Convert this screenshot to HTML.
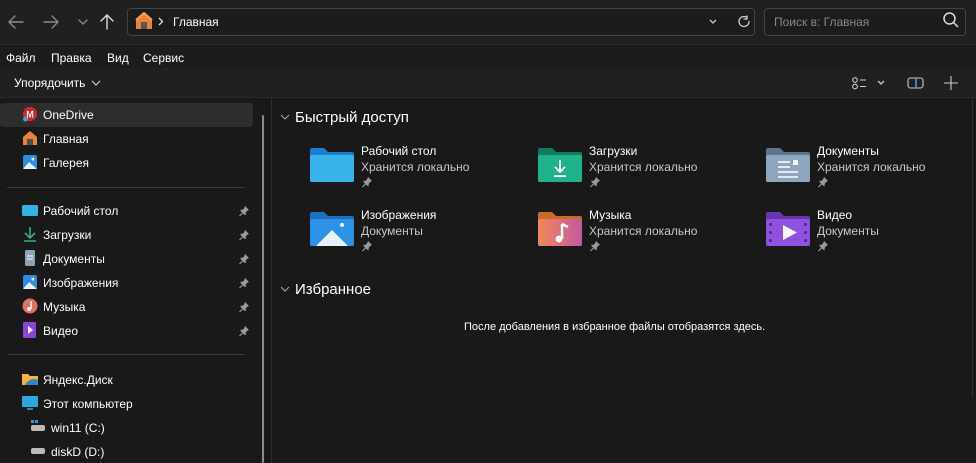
<!DOCTYPE html>
<html><head><meta charset="utf-8"><style>
*{margin:0;padding:0;box-sizing:border-box}
body{width:976px;height:463px;overflow:hidden;background:#191919;font-family:"Liberation Sans","Noto Sans CJK SC",sans-serif;color:#fff;position:relative;font-size:12px}
.a{position:absolute}
.top{left:0;top:0;width:976px;height:44px;background:#202020}
.menu{left:0;top:44px;width:976px;height:24px;background:#1c1c1c;border-top:1px solid #2c2c2c}
.tb{left:0;top:68px;width:976px;height:30px;background:#202020;border-bottom:1px solid #2a2a2a}
.addr{left:127px;top:8px;width:628px;height:28px;border:1px solid #444;border-radius:4px;background:#1c1c1c}
.srch{left:764px;top:8px;width:202px;height:28px;border:1px solid #444;border-radius:4px;background:#1c1c1c}
.t{white-space:nowrap;font-size:12px;color:#fff}
.g{color:#c8c8c8}
.sel{left:0;top:103px;width:253px;height:24px;background:#2d2d2d;border-radius:3px}
.hr{height:1px;background:#3a3a3a;left:7px;width:238px}
</style></head><body>
<svg width="0" height="0" style="position:absolute"><defs><g id="pin"><path d="M6 1L10 5L8 6L6.5 8.5L7 10L5.5 10L1.5 6L1.5 4.5L3 5L5 3.5Z" fill="#9a9a9a"/><path d="M3.5 8L0.5 11" stroke="#9a9a9a" stroke-width="1.2"/></g></defs></svg>
<div class="a top"></div>
<div class="a menu"></div>
<div class="a tb"></div>
<svg class="a" style="left:6px;top:12px" width="120" height="20" viewBox="0 0 120 20" fill="none" stroke-linecap="round" stroke-linejoin="round">
<path d="M3 10H17M3 10L9 4M3 10L9 16" stroke="#8a8a8a" stroke-width="1.4"/>
<path d="M38 10H52M52 10L46 4M52 10L46 16" stroke="#8a8a8a" stroke-width="1.4"/>
<path d="M73 8L77 12L81 8" stroke="#8a8a8a" stroke-width="1.3"/>
<path d="M101 17V3M101 3L95 9M101 3L107 9" stroke="#ddd" stroke-width="1.4"/>
</svg>
<div class="a addr"></div>
<svg class="a" style="left:135px;top:12px" width="18" height="18" viewBox="0 0 18 18"><path d="M9 1L1 8V17H17V8Z" fill="#e8843a"/><path d="M1 8L9 1L17 8" stroke="#f4a261" stroke-width="2" fill="none"/><rect x="6" y="10" width="6" height="7" fill="#555"/></svg>
<svg class="a" style="left:158px;top:17px" width="6" height="9"><path d="M1 1L4.5 4.5L1 8" stroke="#ddd" stroke-width="1.3" fill="none"/></svg>
<div class="a t" style="left:173px;top:15px;font-size:12px">Главная</div>
<svg class="a" style="left:706px;top:14px" width="50" height="16" viewBox="0 0 50 16" fill="none" stroke="#ccc" stroke-width="1.3"><path d="M4 6L7 9L10 6"/><path d="M41 3.5A5 5 0 1 0 43 7.5M41 2V5H38" stroke-linecap="round"/></svg>
<div class="a srch"></div>
<div class="a t" style="left:774px;top:15px;color:#888;font-size:12px">Поиск в: Главная</div>
<svg class="a" style="left:942px;top:11px" width="18" height="18" viewBox="0 0 18 18" fill="none" stroke="#ddd" stroke-width="1.5"><circle cx="7.5" cy="7.5" r="5.5"/><path d="M11.5 11.5L16 16"/></svg>
<div class="a t" style="left:6px;top:51px">Файл</div>
<div class="a t" style="left:51px;top:51px">Правка</div>
<div class="a t" style="left:107px;top:51px">Вид</div>
<div class="a t" style="left:143px;top:51px">Сервис</div>
<div class="a t" style="left:14px;top:76px">Упорядочить</div>
<svg class="a" style="left:91px;top:79px" width="10" height="8"><path d="M1 2L5 6L9 2" stroke="#ccc" stroke-width="1.2" fill="none"/></svg>
<svg class="a" style="left:850px;top:75px" width="115" height="16" viewBox="0 0 115 16" fill="none" stroke="#ccc" stroke-width="1.1"><circle cx="5" cy="5" r="2.3"/><circle cx="5" cy="11.5" r="2.3"/><path d="M10 5H16M10 11.5H16"/><path d="M28 6L31 9L34 6" stroke-width="1.3"/><rect x="58" y="3" width="15" height="10" rx="2.5"/><path d="M66 3V13" stroke="#4aa3e8" stroke-width="1.5"/><path d="M101 1V15M94 8H108"/></svg>
<div class="a sel"></div>
<div class="a" style="left:262px;top:115px;width:2px;height:348px;background:#8a8a8a;border-radius:1px"></div>
<div class="a" style="left:271px;top:98px;width:1px;height:365px;background:#2e2e2e"></div>
<div class="a" style="left:972px;top:98px;width:1px;height:300px;background:#2e2e2e"></div>
<svg class="a" style="left:22px;top:106px" width="16" height="16"><circle cx="8" cy="8" r="7" fill="#d8262c"/><text x="8" y="11.5" font-size="9" font-weight="bold" fill="#fff" text-anchor="middle" font-family="Liberation Sans">M</text><circle cx="3.5" cy="13" r="2.5" fill="#4a9ad4"/></svg>
<div class="a t" style="left:43px;top:108px">OneDrive</div>
<svg class="a" style="left:22px;top:130px" width="16" height="16"><path d="M8 1L1 7V15H15V7Z" fill="#e8843a"/><rect x="5" y="9" width="6" height="6" fill="#4d4d4d"/></svg>
<div class="a t" style="left:43px;top:132px">Главная</div>
<svg class="a" style="left:22px;top:154px" width="16" height="16"><rect x="1" y="1" width="14" height="14" rx="2" fill="#2a8ee0"/><path d="M1 15L7 8L15 15Z" fill="#e8f2fb"/><circle cx="11" cy="5" r="1.5" fill="#fff"/></svg>
<div class="a t" style="left:43px;top:156px">Галерея</div>
<div class="a hr" style="top:187px"></div>
<svg class="a" style="left:22px;top:202px" width="16" height="16"><rect x="0" y="3" width="16" height="11" rx="1.5" fill="#34b3e4"/></svg>
<div class="a t" style="left:43px;top:204px">Рабочий стол</div>
<svg class="a" style="left:22px;top:226px" width="16" height="16" fill="none" stroke="#2fb38a" stroke-width="1.6"><path d="M8 1V11M3 7L8 12L13 7M2 15H14"/></svg>
<div class="a t" style="left:43px;top:228px">Загрузки</div>
<svg class="a" style="left:22px;top:250px" width="16" height="16"><rect x="3" y="0" width="10" height="16" rx="1.5" fill="#8fa3b8"/><path d="M5 6H11M5 9H11" stroke="#fff" stroke-width="1"/></svg>
<div class="a t" style="left:43px;top:252px">Документы</div>
<svg class="a" style="left:22px;top:274px" width="16" height="16"><rect x="1" y="1" width="14" height="14" rx="2" fill="#2a8ee0"/><path d="M1 15L7 8L15 15Z" fill="#e8f2fb"/><circle cx="11" cy="5" r="1.5" fill="#fff"/></svg>
<div class="a t" style="left:43px;top:276px">Изображения</div>
<svg class="a" style="left:22px;top:298px" width="16" height="16"><circle cx="8" cy="8" r="7.5" fill="#e27063"/><path d="M9 3V11" stroke="#fff" stroke-width="1.5"/><circle cx="7" cy="11" r="2" fill="#fff"/></svg>
<div class="a t" style="left:43px;top:300px">Музыка</div>
<svg class="a" style="left:22px;top:322px" width="16" height="16"><rect x="1" y="0" width="13" height="16" rx="1.5" fill="#8b46d6"/><path d="M6 4L11 8L6 12Z" fill="#fff"/></svg>
<div class="a t" style="left:43px;top:324px">Видео</div>
<svg class="a" style="left:239px;top:205px" width="12" height="132"><use href="#pin" y="0"/><use href="#pin" y="24"/><use href="#pin" y="48"/><use href="#pin" y="72"/><use href="#pin" y="96"/><use href="#pin" y="120"/></svg>
<div class="a hr" style="top:354px"></div>
<svg class="a" style="left:22px;top:371px" width="16" height="16"><path d="M0 3H6L8 5H16V14H0Z" fill="#f0b73a"/><path d="M4 12Q10 6 16 9V14H3Z" fill="#3d82c6"/></svg>
<div class="a t" style="left:43px;top:373px">Яндекс.Диск</div>
<svg class="a" style="left:22px;top:395px" width="16" height="16"><rect x="0" y="1" width="16" height="11" rx="1" fill="#2fa8dc"/><rect x="5" y="13" width="6" height="2" fill="#3a7eb0"/></svg>
<div class="a t" style="left:43px;top:397px">Этот компьютер</div>
<svg class="a" style="left:30px;top:418px" width="16" height="16"><rect x="1" y="7" width="14" height="6" rx="2" fill="#bbb"/><rect x="1" y="2" width="3" height="3" fill="#3a9ad9"/><rect x="5" y="2" width="3" height="3" fill="#3a9ad9"/></svg>
<div class="a t" style="left:51px;top:421px">win11 (C:)</div>
<svg class="a" style="left:30px;top:442px" width="16" height="16"><rect x="1" y="6" width="14" height="6" rx="2" fill="#bbb"/></svg>
<div class="a t" style="left:51px;top:445px">diskD (D:)</div>
<svg class="a" style="left:280px;top:113px" width="10" height="8"><path d="M1 2L5 6L9 2" stroke="#aaa" stroke-width="1" fill="none"/></svg>
<div class="a t" style="left:295px;top:109px;font-size:15px">Быстрый доступ</div>
<svg class="a" style="left:280px;top:285px" width="10" height="8"><path d="M1 2L5 6L9 2" stroke="#aaa" stroke-width="1" fill="none"/></svg>
<div class="a t" style="left:295px;top:281px;font-size:15px">Избранное</div>
<div class="a t" style="left:464px;top:321px;font-size:11px">После добавления в избранное файлы отобразятся здесь.</div>
<svg class="a" style="left:310px;top:147px" width="44" height="36"><path d="M0 3Q0 1 2 1H14L18 5H42Q44 5 44 7V33Q44 35 42 35H2Q0 35 0 33Z" fill="#1a7fd0"/><rect x="0" y="8" width="44" height="27" rx="2" fill="#39b4ea"/></svg>
<svg class="a" style="left:538px;top:147px" width="44" height="36"><path d="M0 3Q0 1 2 1H14L18 5H42Q44 5 44 7V33Q44 35 42 35H2Q0 35 0 33Z" fill="#0f7d62"/><rect x="0" y="8" width="44" height="27" rx="2" fill="#20b38b"/><path d="M22 13V25M17 20L22 25L27 20M16 29H28" stroke="#fff" stroke-width="1.8" fill="none"/></svg>
<svg class="a" style="left:766px;top:147px" width="44" height="36"><path d="M0 3Q0 1 2 1H14L18 5H42Q44 5 44 7V33Q44 35 42 35H2Q0 35 0 33Z" fill="#5d7489"/><rect x="0" y="8" width="44" height="27" rx="2" fill="#8ea6bd"/><path d="M12 15H24M12 20H24M12 25H32M12 30H32" stroke="#fff" stroke-width="1.6"/><rect x="27" y="13" width="5" height="5" fill="#fff"/></svg>
<svg class="a" style="left:310px;top:211px" width="44" height="36"><path d="M0 3Q0 1 2 1H14L18 5H42Q44 5 44 7V33Q44 35 42 35H2Q0 35 0 33Z" fill="#1a6fc0"/><rect x="0" y="8" width="44" height="27" rx="2" fill="#2d92e6"/><path d="M6 35L22 19L38 35Z" fill="#e4f1fc"/><circle cx="32" cy="14" r="2" fill="#fff"/></svg>
<svg class="a" style="left:538px;top:211px" width="44" height="36"><defs><linearGradient id="m" x1="0" x2="1"><stop offset="0" stop-color="#f2885a"/><stop offset="1" stop-color="#c15a9e"/></linearGradient></defs><path d="M0 3Q0 1 2 1H14L18 5H42Q44 5 44 7V33Q44 35 42 35H2Q0 35 0 33Z" fill="#c86a2c"/><rect x="0" y="8" width="44" height="27" rx="2" fill="url(#m)"/><path d="M24 13V28" stroke="#fff" stroke-width="2.5"/><path d="M24 13L30 16" stroke="#fff" stroke-width="2.5"/><circle cx="21" cy="28" r="3.5" fill="#fff"/></svg>
<svg class="a" style="left:766px;top:211px" width="44" height="36"><path d="M0 3Q0 1 2 1H14L18 5H42Q44 5 44 7V33Q44 35 42 35H2Q0 35 0 33Z" fill="#6a36b0"/><rect x="0" y="8" width="44" height="27" rx="2" fill="#9050e0"/><path d="M17 14L31 21.5L17 29Z" fill="#fff"/><g fill="#5a2a9a"><rect x="3" y="12" width="3" height="3"/><rect x="3" y="20" width="3" height="3"/><rect x="3" y="28" width="3" height="3"/><rect x="38" y="12" width="3" height="3"/><rect x="38" y="20" width="3" height="3"/><rect x="38" y="28" width="3" height="3"/></g></svg>
<div class="a t" style="left:361px;top:144px">Рабочий стол</div>
<div class="a t g" style="left:361px;top:160px">Хранится локально</div>
<div class="a t" style="left:589px;top:144px">Загрузки</div>
<div class="a t g" style="left:589px;top:160px">Хранится локально</div>
<div class="a t" style="left:817px;top:144px">Документы</div>
<div class="a t g" style="left:817px;top:160px">Хранится локально</div>
<div class="a t" style="left:361px;top:208px">Изображения</div>
<div class="a t g" style="left:361px;top:224px">Документы</div>
<div class="a t" style="left:589px;top:208px">Музыка</div>
<div class="a t g" style="left:589px;top:224px">Хранится локально</div>
<div class="a t" style="left:817px;top:208px">Видео</div>
<div class="a t g" style="left:817px;top:224px">Документы</div>
<svg class="a" style="left:362px;top:176px" width="12" height="12"><use href="#pin"/></svg>
<svg class="a" style="left:590px;top:176px" width="12" height="12"><use href="#pin"/></svg>
<svg class="a" style="left:818px;top:176px" width="12" height="12"><use href="#pin"/></svg>
<svg class="a" style="left:362px;top:240px" width="12" height="12"><use href="#pin"/></svg>
<svg class="a" style="left:590px;top:240px" width="12" height="12"><use href="#pin"/></svg>
<svg class="a" style="left:818px;top:240px" width="12" height="12"><use href="#pin"/></svg>
</body></html>
